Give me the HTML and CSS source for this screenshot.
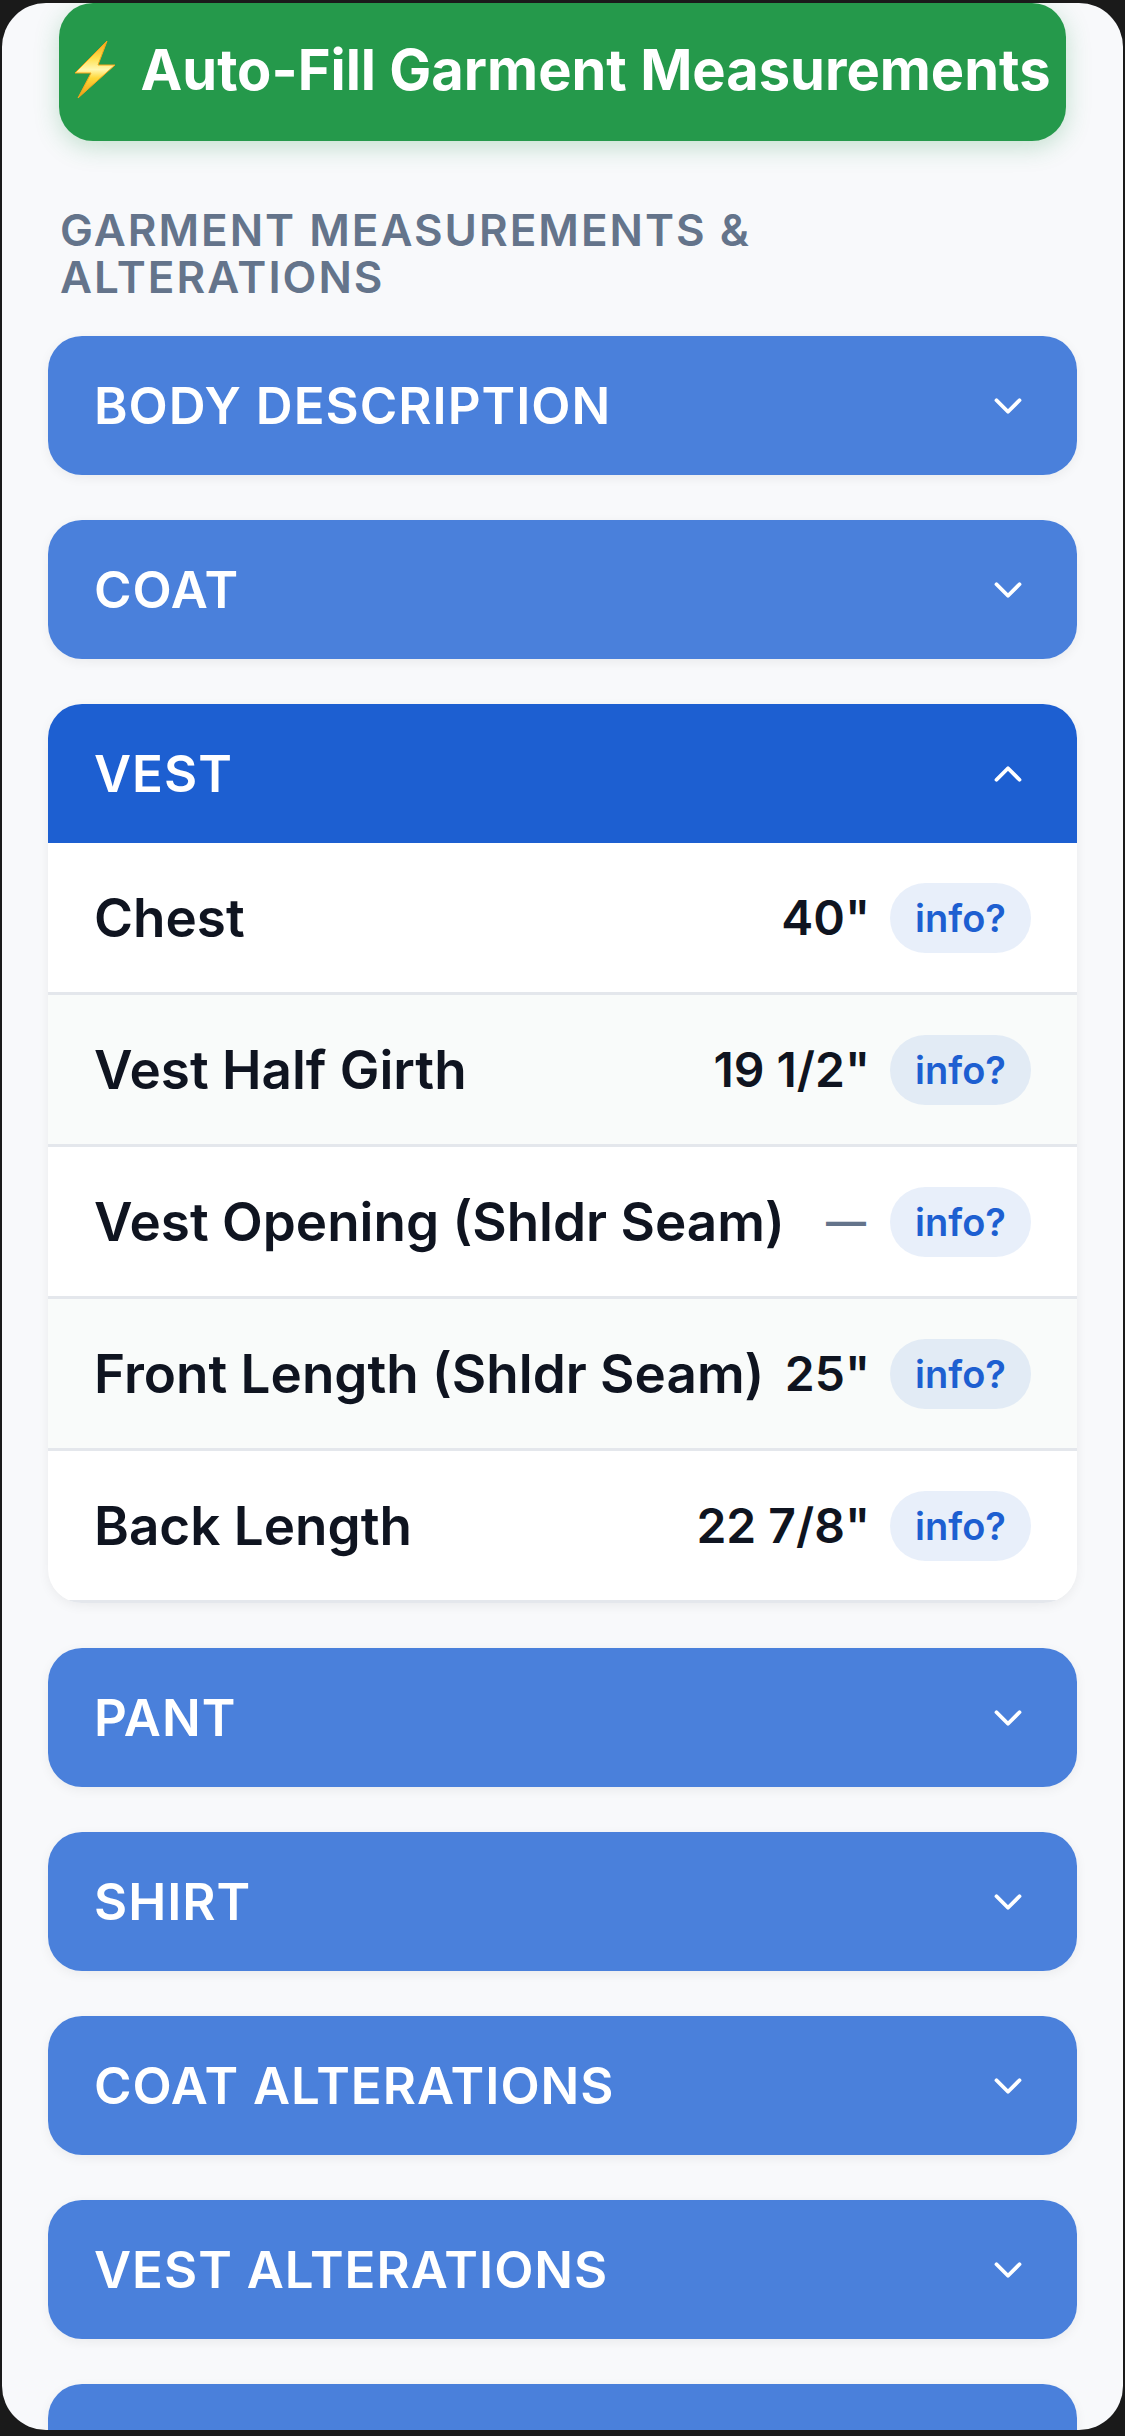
FILE: index.html
```html
<!DOCTYPE html>
<html lang="en">
<head>
    <meta charset="UTF-8">
    <meta name="viewport" content="width=device-width, initial-scale=1">
    <title>Garment Measurements</title>
    <link rel="stylesheet" href="styles.css">
</head>
<body>
    <!-- chevron shared by all section headers -->
    <svg class="symbols" aria-hidden="true">
        <symbol id="chevron" viewBox="0 0 24 24">
            <path d="M6 9l6 6 6-6" fill="none" stroke="currentColor" stroke-width="2" stroke-linecap="round" stroke-linejoin="round"/>
        </symbol>
    </svg>

    <main class="screen">
        <button class="autofill-button">
            <svg class="bolt" viewBox="0 0 42 60" aria-hidden="true">
                <defs>
                    <linearGradient id="boltFill" x1="0" y1="0" x2="0" y2="1">
                        <stop offset="0" stop-color="#f5a216"/>
                        <stop offset="0.3" stop-color="#ffe04d"/>
                        <stop offset="0.5" stop-color="#fff7b0"/>
                        <stop offset="0.65" stop-color="#ffd83a"/>
                        <stop offset="1" stop-color="#ee9a12"/>
                    </linearGradient>
                </defs>
                <path d="M33 1L1 33L17 33L4 58L41 25L24 25Z" fill="url(#boltFill)" stroke="#f9a61a" stroke-width="1" stroke-linejoin="round"/>
            </svg>
            <span>Auto-Fill Garment Measurements</span>
        </button>

        <h2 class="section-title">Garment Measurements &amp; Alterations</h2>

        <div class="accordion">
            <section class="card">
                <button class="card-header" aria-expanded="false">Body Description <svg class="chevron" aria-hidden="true"><use href="#chevron"/></svg></button>
            </section>
            <section class="card">
                <button class="card-header" aria-expanded="false">Coat <svg class="chevron" aria-hidden="true"><use href="#chevron"/></svg></button>
            </section>
            <section class="card open">
                <button class="card-header" aria-expanded="true">Vest <svg class="chevron" aria-hidden="true"><use href="#chevron"/></svg></button>
                <table class="measurements">
                    <tbody>
                        <tr>
                            <th scope="row">Chest</th>
                            <td class="value">40"</td>
                            <td><button class="info-button">info?</button></td>
                        </tr>
                        <tr>
                            <th scope="row">Vest Half Girth</th>
                            <td class="value">19 1/2"</td>
                            <td><button class="info-button">info?</button></td>
                        </tr>
                        <tr>
                            <th scope="row">Vest Opening (Shldr Seam)</th>
                            <td class="value empty">—</td>
                            <td><button class="info-button">info?</button></td>
                        </tr>
                        <tr>
                            <th scope="row">Front Length (Shldr Seam)</th>
                            <td class="value">25"</td>
                            <td><button class="info-button">info?</button></td>
                        </tr>
                        <tr>
                            <th scope="row">Back Length</th>
                            <td class="value">22 7/8"</td>
                            <td><button class="info-button">info?</button></td>
                        </tr>
                    </tbody>
                </table>
            </section>
            <section class="card">
                <button class="card-header" aria-expanded="false">Pant <svg class="chevron" aria-hidden="true"><use href="#chevron"/></svg></button>
            </section>
            <section class="card">
                <button class="card-header" aria-expanded="false">Shirt <svg class="chevron" aria-hidden="true"><use href="#chevron"/></svg></button>
            </section>
            <section class="card">
                <button class="card-header" aria-expanded="false">Coat Alterations <svg class="chevron" aria-hidden="true"><use href="#chevron"/></svg></button>
            </section>
            <section class="card">
                <button class="card-header" aria-expanded="false">Vest Alterations <svg class="chevron" aria-hidden="true"><use href="#chevron"/></svg></button>
            </section>
            <section class="card">
                <button class="card-header" aria-expanded="false" aria-label="Pant Alterations"></button>
            </section>
        </div>
    </main>
</body>
</html>
```
FILE: styles.css
```css
* {
    box-sizing: border-box;
}

body {
    display: flex;
    height: 100vh;
    margin: 0;
    padding: 3px 2px 6px;
    background-color: #1a1a1a;
    font-family: Inter, "Liberation Sans", sans-serif;
    color: #0f1420;
}

button {
    border: none;
    font-family: inherit;
    cursor: pointer;
}

.symbols {
    display: none;
}

.screen {
    flex: 1;
    min-width: 0;
    padding: 0 46px;
    background-color: #f8f9fb;
    border-radius: 44px;
    overflow: hidden;
}

.autofill-button {
    display: flex;
    justify-content: center;
    align-items: center;
    gap: 24px;
    width: calc(100% - 22px);
    height: 138px;
    margin: 0 11px;
    padding: 0 8px 5px;
    background-color: #25994b;
    color: #fff;
    font-size: 56px;
    font-weight: 700;
    white-space: nowrap;
    border-radius: 34px;
    box-shadow: 0 6px 24px rgba(37, 153, 75, 0.25);
}

.bolt {
    flex: none;
    width: 42px;
    height: 60px;
}

.section-title {
    max-width: 800px;
    margin: 66px 12px 35px;
    color: #64748b;
    font-size: 44px;
    font-weight: 600;
    line-height: 47px;
    letter-spacing: 2px;
    text-transform: uppercase;
}

.accordion {
    display: flex;
    flex-direction: column;
    gap: 45px;
}

.card {
    flex: none;
    background-color: #fff;
    border-radius: 34px;
    box-shadow: 0 3px 12px rgba(0, 0, 0, 0.06);
    overflow: hidden;
}

.card-header {
    display: flex;
    justify-content: space-between;
    align-items: center;
    width: 100%;
    height: 139px;
    padding: 0 46px;
    background-color: #4a80db;
    color: #fff;
    font-size: 51px;
    font-weight: 600;
    letter-spacing: 1px;
    text-transform: uppercase;
}

.open .card-header {
    background-color: #1d5fd1;
}

.chevron {
    width: 46px;
    height: 46px;
}

.open .chevron {
    transform: rotate(180deg);
}

.measurements,
.measurements tbody {
    display: block;
}

/* each row sizes its own columns so long labels keep to one line */
.measurements tr {
    display: flex;
    align-items: center;
    min-height: 152px;
    padding: 0 46px;
    border-bottom: 3px solid #e4e7ec;
}

.measurements tr:nth-child(even) {
    background-color: #f9fbfa;
}

.measurements th,
.measurements td {
    padding: 0;
    font-weight: 600;
}

.measurements th {
    flex: 1;
    font-size: 53px;
    text-align: left;
}

.measurements .value {
    padding: 0 20px 0 8px;
    font-size: 48px;
    white-space: nowrap;
}

.measurements .empty {
    padding-right: 24px;
    color: #64748b;
    font-size: 40px;
}

.info-button {
    display: block;
    width: 141px;
    height: 70px;
    padding: 0;
    background-color: rgba(29, 95, 209, 0.1);
    color: #1d5fd1;
    font-size: 38px;
    font-weight: 600;
    border-radius: 35px;
}
```
